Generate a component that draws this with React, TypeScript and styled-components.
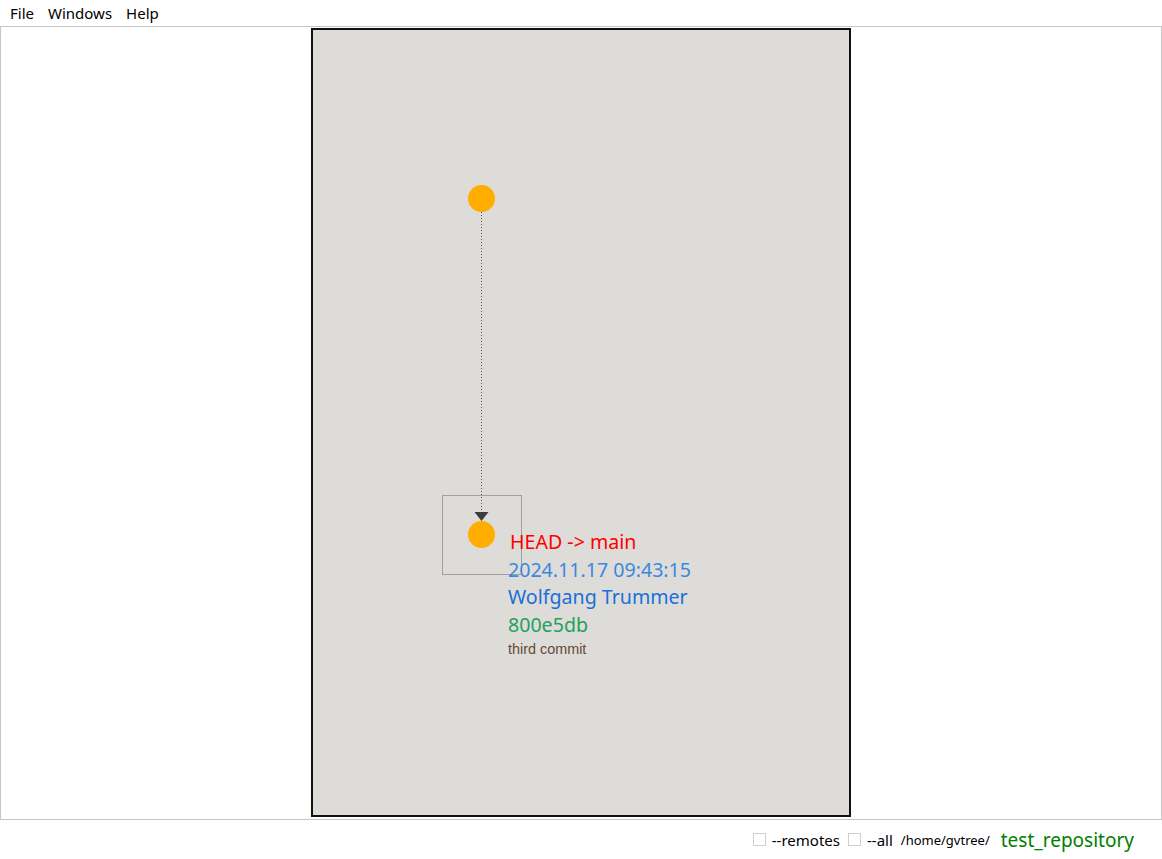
import React from "react";
import styled, { createGlobalStyle } from "styled-components";

const Global = createGlobalStyle`
  html, body { margin: 0; padding: 0; background: #ffffff; }
  body { font-family: "Noto Sans", "DejaVu Sans", sans-serif; color: #000; }
  #root { width: 1162px; height: 859px; }
`;

const Window = styled.div`
  width: 1162px;
  height: 859px;
  display: flex;
  flex-direction: column;
  background: #ffffff;
`;

const MenuBar = styled.div`
  height: 26px;
  display: flex;
  align-items: center;
  gap: 14px;
  padding: 1px 0 0 10px;
  font-size: 15px;
  box-sizing: border-box;
`;

const MenuItem = styled.span`
  line-height: 25px;
  color: #000;
`;

const Panel = styled.div`
  height: 794px;
  border: 1px solid #c6c6c6;
  box-sizing: border-box;
  display: flex;
  justify-content: center;
  padding-top: 1px;
`;

const Canvas = styled.div`
  position: relative;
  width: 540px;
  height: 789px;
  box-sizing: border-box;
  border: 2px solid #111;
  background: #dedcd8;
`;

const Graph = styled.svg`
  position: absolute;
  left: 0;
  top: 0;
`;

const Labels = styled.div<{ $x: number; $y: number }>`
  position: absolute;
  left: ${(p) => p.$x}px;
  top: ${(p) => p.$y}px;
  display: flex;
  flex-direction: column;
  white-space: nowrap;
`;

const Line = styled.span<{ $color: string; $indent?: number }>`
  font-size: 19.6px;
  line-height: 27.5px;
  color: ${(p) => p.$color};
  padding-left: ${(p) => p.$indent ?? 0}px;
`;

const Message = styled.span`
  font-family: "Liberation Sans", Arial, sans-serif;
  font-size: 14.4px;
  line-height: 20px;
  padding-top: 1px;
  color: #634a36;
`;

const StatusBar = styled.div`
  flex: 1;
  display: flex;
  align-items: center;
  justify-content: flex-end;
  padding-right: 28px;
`;

const Check = styled.label`
  display: flex;
  align-items: center;
  gap: 6px;
  font-size: 15px;
  margin-right: 8px;
`;

const Box = styled.span`
  width: 11px;
  height: 11px;
  border: 1px solid #cfcfcf;
  background: #fff;
  display: inline-block;
`;

const Path = styled.span`
  font-size: 13px;
  margin-right: 11px;
`;

const RepoName = styled.span`
  font-size: 19px;
  color: #008000;
`;

export default function App() {
  const cx = 168;
  const n1 = 168;
  const n2 = 504;
  return (
    <>
      <Global />
      <Window>
        <MenuBar>
          <MenuItem>File</MenuItem>
          <MenuItem>Windows</MenuItem>
          <MenuItem>Help</MenuItem>
        </MenuBar>
        <Panel>
          <Canvas>
            <Graph width={536} height={785}>
              <line
                x1={cx + 0.5}
                y1={n1 + 14}
                x2={cx + 0.5}
                y2={n2 - 22}
                stroke="#555"
                strokeWidth={1}
                strokeDasharray="1 2"
              />
              <polygon
                points={`${cx - 6.5},${n2 - 22} ${cx + 7.5},${n2 - 22} ${cx + 0.5},${n2 - 13}`}
                fill="#3c3c3c"
              />
              <rect x={129.5} y={465.5} width={79} height={79} fill="none" stroke="#a0a0a0" strokeWidth={1} />
              <circle cx={cx + 0.5} cy={n1 + 0.5} r={13.5} fill="#ffae00" />
              <circle cx={cx + 0.5} cy={n2 + 0.5} r={13.5} fill="#ffae00" />
            </Graph>
            <Labels $x={195} $y={498}>
              <Line $color="#ff0000" $indent={2}>HEAD -&gt; main</Line>
              <Line $color="#3b88dd">2024.11.17 09:43:15</Line>
              <Line $color="#1a6fd8">Wolfgang Trummer</Line>
              <Line $color="#25a060">800e5db</Line>
              <Message>third commit</Message>
            </Labels>
          </Canvas>
        </Panel>
        <StatusBar>
          <Check>
            <Box />
            --remotes
          </Check>
          <Check>
            <Box />
            --all
          </Check>
          <Path>/home/gvtree/</Path>
          <RepoName>test_repository</RepoName>
        </StatusBar>
      </Window>
    </>
  );
}
